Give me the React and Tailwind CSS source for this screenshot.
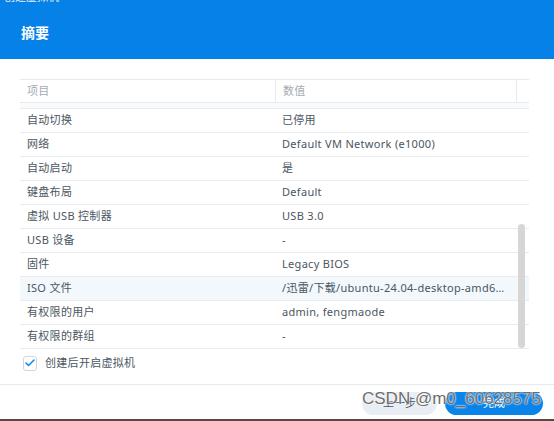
import { Check } from 'lucide-react'

const rows = [
  ['自动切换', '已停用'],
  ['网络', 'Default VM Network (e1000)'],
  ['自动启动', '是'],
  ['键盘布局', 'Default'],
  ['虚拟 USB 控制器', 'USB 3.0'],
  ['USB 设备', '-'],
  ['固件', 'Legacy BIOS'],
  ['ISO 文件', '/迅雷/下载/ubuntu-24.04-desktop-amd64.iso', true],
  ['有权限的用户', 'admin, fengmaode'],
  ['有权限的群组', '-'],
]

const font = { fontFamily: '"Noto Sans", "Noto Sans CJK SC", sans-serif' }

export default function App() {
  return (
    <div className="relative w-[554px] h-[421px] bg-white overflow-hidden flex flex-col" style={font}>
      {/* blue header */}
      <div className="h-[59px] shrink-0 bg-[#0581e8] relative">
        <div className="absolute left-[4px] top-[-9px] text-[11px] leading-[12px] text-white/90">创建虚拟机</div>
        <div className="absolute right-[10px] top-[-9px] text-[12px] leading-[12px] text-white">✕</div>
        <div className="pl-[21px] pt-[24px] text-[14px] leading-[18px] font-bold text-white">摘要</div>
      </div>

      {/* table */}
      <div className="mt-[20px] ml-[20px] w-[509px] text-[11px] tracking-[0.3px] text-[#4b5661]">
        <div className="flex h-[24px] border-y border-[#e6eaef] text-[#a3abb3]">
          <div className="w-[255px] flex items-center pl-[7px]">项目</div>
          <div className="w-[241px] flex items-center pl-[7px] border-l border-[#e6eaef]">数值</div>
          <div className="flex-1 border-l border-[#e6eaef]" />
        </div>
        <div className="h-[5px] bg-[#f9fafb]" />
        <div className="relative border-t border-[#e8ecf0]">
          {rows.map(([k, v, hl]) => (
            <div
              key={k}
              className={`flex h-[24px] items-center border-b border-[#e8ecf0] ${hl ? 'bg-[#f3f8fd]' : ''}`}
            >
              <div className="w-[255px] pl-[7px] whitespace-nowrap">{k}</div>
              <div className="w-[230px] pl-[7px] whitespace-nowrap overflow-hidden text-ellipsis">{v}</div>
            </div>
          ))}
          <div className="absolute right-[4px] bottom-[1px] w-[7px] h-[124px] rounded-full bg-[#d6d6d6]" />
        </div>
      </div>

      {/* checkbox */}
      <div className="flex items-center ml-[23px] mt-[6px] gap-[8px]">
        <div className="w-[14px] h-[15px] rounded-[3px] border border-[#cfd6de] bg-white flex items-center justify-center">
          <Check className="w-[12px] h-[12px] text-[#0a84e8]" strokeWidth={3} />
        </div>
        <span className="text-[11px] tracking-[0.3px] text-[#4b5661]">创建后开启虚拟机</span>
      </div>

      {/* footer */}
      <div className="mt-[12px] border-t border-[#e6eaef] flex-1 flex justify-end items-start pt-[7px] pr-[11px] gap-[8px]">
        <button className="w-[75px] h-[23px] rounded-full bg-[#e9eef4] text-[11px] text-[#4b5661]">上一步</button>
        <button className="w-[98px] h-[23px] rounded-full bg-[#0a84e8] text-[11px] text-white">完成</button>
      </div>
      <div className="h-[2px] shrink-0 bg-[#5a4a3c]" />

      {/* watermark */}
      <div
        className="absolute left-[362px] top-[388px] text-[17px] leading-[22px] text-[#6e6e6e] whitespace-nowrap"
        style={{ fontFamily: '"Liberation Sans", sans-serif', textShadow: '0 0 2px #fff, 0 0 2px #fff' }}
      >
        CSDN @m0_60628575
      </div>
    </div>
  )
}
